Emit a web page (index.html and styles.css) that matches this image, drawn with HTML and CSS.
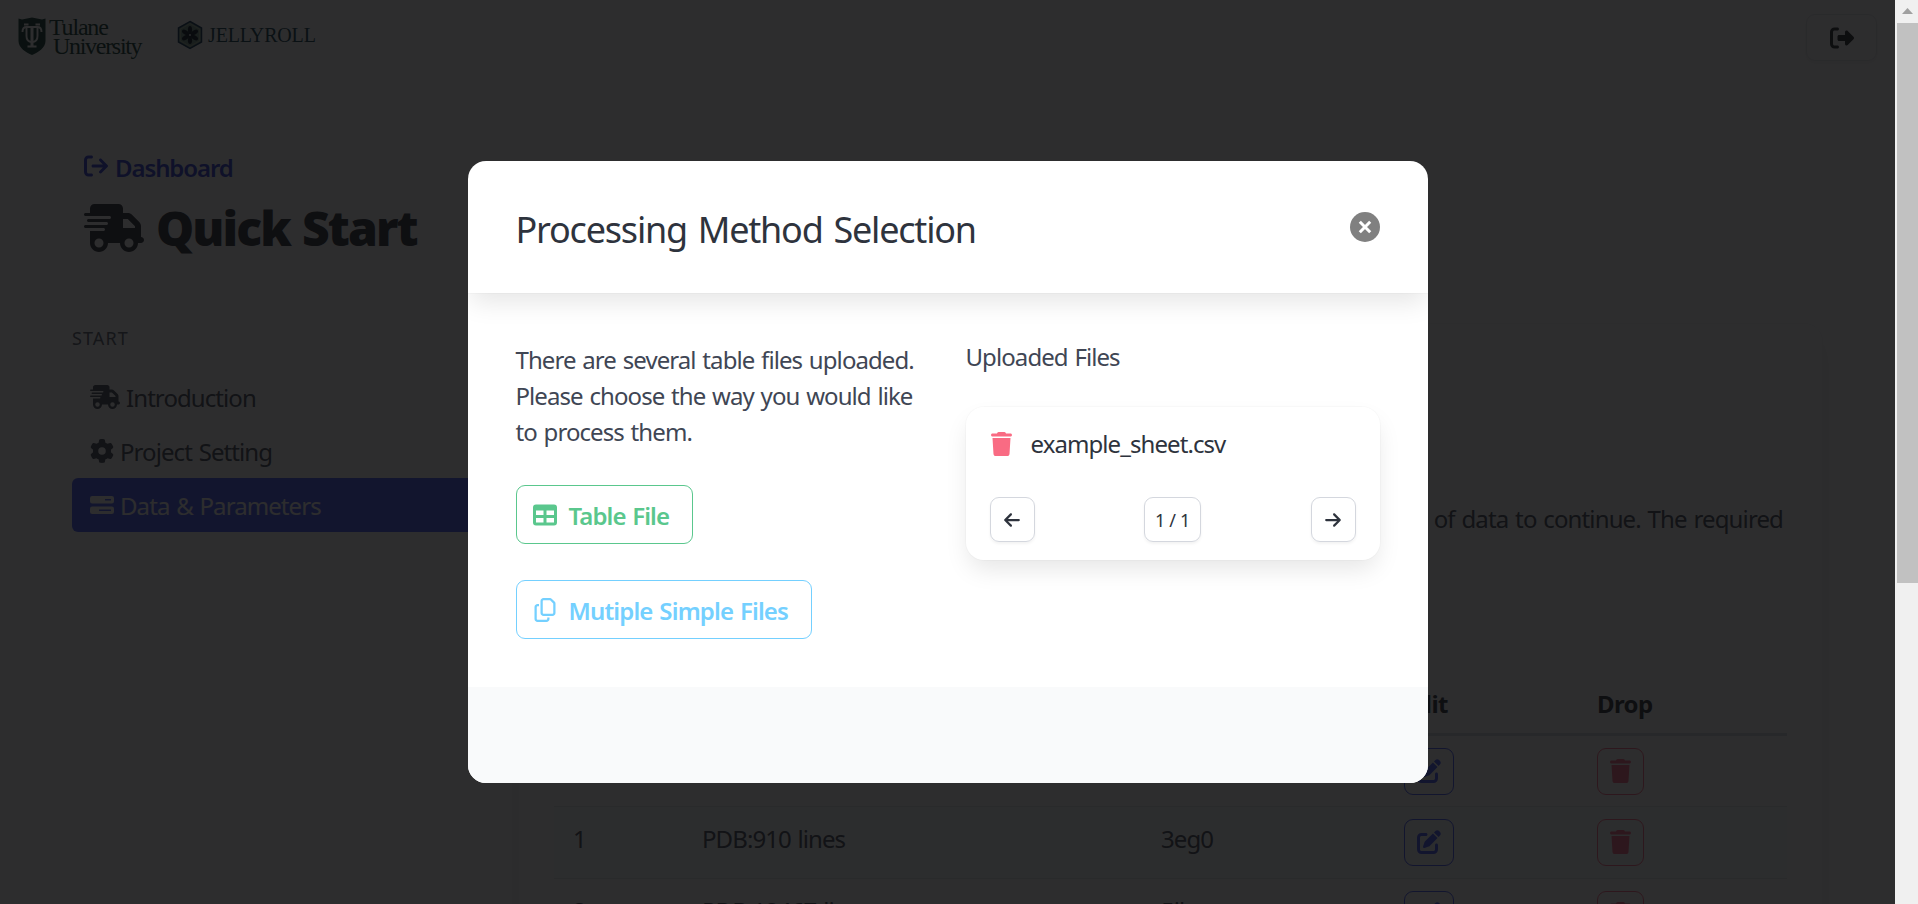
FILE: index.html
```html
<!DOCTYPE html>
<html lang="en">
<head>
<meta charset="utf-8">
<title>Quick Start</title>
<link rel="stylesheet" href="styles.css">
</head>
<body>
<svg class="defs" width="0" height="0">
  <symbol id="truck" viewBox="0 0 640 512"><path d="M112 0C85.500 0 64 21.500 64 48V96H16c-8.800 0-16 7.200-16 16s7.200 16 16 16H272c8.800 0 16 7.200 16 16s-7.200 16-16 16H48c-8.800 0-16 7.200-16 16s7.200 16 16 16H240c8.800 0 16 7.200 16 16s-7.200 16-16 16H16c-8.800 0-16 7.200-16 16s7.200 16 16 16H208c8.800 0 16 7.200 16 16s-7.200 16-16 16H64V416c0 53 43 96 96 96s96-43 96-96H384c0 53 43 96 96 96s96-43 96-96h32c17.700 0 32-14.300 32-32s-14.300-32-32-32V237.300c0-17-6.700-33.300-18.700-45.300L512 114.700c-12-12-28.300-18.700-45.300-18.700H416V48c0-26.500-21.500-48-48-48H112zM544 237.300V256H416V160h50.700L544 237.300zM160 368a48 48 0 1 1 0 96 48 48 0 1 1 0-96zm272 48a48 48 0 1 1 96 0 48 48 0 1 1-96 0z"/></symbol>
  <symbol id="gear" viewBox="0 0 512 512"><path d="M495.900 166.600c3.200 8.700 .5 18.400-6.400 24.600l-43.300 39.400c1.100 8.300 1.700 16.800 1.700 25.400s-.6 17.100-1.700 25.400l43.300 39.400c6.900 6.200 9.600 15.900 6.400 24.600c-4.400 11.900-9.700 23.300-15.800 34.300l-4.700 8.100c-6.600 11-14 21.400-22.100 31.200c-5.900 7.200-15.700 9.600-24.500 6.800l-55.700-17.700c-13.400 10.300-28.200 18.900-44 25.400l-12.500 57.100c-2 9.100-9 16.300-18.200 17.800c-13.800 2.300-28 3.500-42.500 3.500s-28.700-1.200-42.500-3.500c-9.200-1.500-16.200-8.700-18.200-17.800l-12.500-57.100c-15.800-6.500-30.600-15.100-44-25.400L83.100 425.900c-8.800 2.800-18.600 .3-24.500-6.800c-8.100-9.800-15.500-20.200-22.100-31.200l-4.700-8.100c-6.100-11-11.400-22.400-15.800-34.300c-3.200-8.700-.5-18.400 6.400-24.600l43.300-39.400C64.600 273.100 64 264.600 64 256s.6-17.100 1.700-25.400L22.400 191.200c-6.900-6.200-9.600-15.900-6.400-24.600c4.400-11.900 9.700-23.300 15.800-34.300l4.700-8.100c6.600-11 14-21.400 22.100-31.200c5.900-7.200 15.700-9.600 24.500-6.800l55.700 17.700c13.400-10.300 28.200-18.900 44-25.400l12.500-57.100c2-9.100 9-16.300 18.200-17.800C227.300 1.200 241.500 0 256 0s28.700 1.200 42.500 3.500c9.200 1.500 16.200 8.700 18.200 17.800l12.500 57.100c15.800 6.500 30.600 15.100 44 25.400l55.700-17.700c8.800-2.800 18.600-.3 24.500 6.800c8.100 9.800 15.500 20.200 22.100 31.200l4.700 8.100c6.100 11 11.400 22.400 15.800 34.300zM256 336a80 80 0 1 0 0-160 80 80 0 1 0 0 160z"/></symbol>
  <symbol id="bars" viewBox="0 0 512 512"><path fill-rule="evenodd" d="M48 64H464a48 48 0 0 1 48 48v64a48 48 0 0 1-48 48H48a48 48 0 0 1-48-48v-64a48 48 0 0 1 48-48zM320 128v32H448V128zM48 288H464a48 48 0 0 1 48 48v64a48 48 0 0 1-48 48H48a48 48 0 0 1-48-48v-64a48 48 0 0 1 48-48zM192 352v32H448V352z"/></symbol>
  <symbol id="table" viewBox="0 0 512 512"><path fill-rule="evenodd" d="M64 32H448a64 64 0 0 1 64 64V416a64 64 0 0 1-64 64H64a64 64 0 0 1-64-64V96a64 64 0 0 1 64-64zM64 160v96H224V160zM288 160v96H448V160zM64 320v96H224V320zM288 320v96H448V320z"/></symbol>
  <symbol id="copy" viewBox="0 0 448 512"><path d="M384 336H192c-8.800 0-16-7.200-16-16V64c0-8.800 7.200-16 16-16H332.100L400 115.900V320c0 8.800-7.200 16-16 16zM192 384H384c35.300 0 64-28.700 64-64V115.900c0-12.700-5.100-24.900-14.100-33.900L366.100 14.100c-9-9-21.200-14.100-33.900-14.100H192c-35.300 0-64 28.700-64 64V320c0 35.300 28.700 64 64 64zM64 128c-35.300 0-64 28.700-64 64V448c0 35.300 28.700 64 64 64H256c35.300 0 64-28.700 64-64V416H272v32c0 8.800-7.200 16-16 16H64c-8.800 0-16-7.200-16-16V192c0-8.800 7.200-16 16-16H96V128H64z"/></symbol>
  <symbol id="trash" viewBox="0 0 448 512"><path d="M135.200 17.700L128 32H32C14.300 32 0 46.300 0 64S14.300 96 32 96H416c17.700 0 32-14.300 32-32s-14.300-32-32-32H320l-7.200-14.300C307.400 6.800 296.300 0 284.200 0H163.800c-12.100 0-23.200 6.800-28.600 17.700zM416 128H32L53.200 467c1.600 25.300 22.600 45 47.900 45H346.900c25.300 0 46.300-19.700 47.900-45L416 128z"/></symbol>
  <symbol id="edit" viewBox="0 0 512 512"><path d="M471.600 21.700c-21.900-21.900-57.300-21.900-79.200 0L362.300 51.700l97.900 97.900 30.100-30.100c21.900-21.900 21.900-57.300 0-79.200L471.600 21.700zm-299.200 220c-6.100 6.100-10.800 13.600-13.500 21.900l-29.600 88.800c-2.900 8.600-.6 18.100 5.800 24.600s15.900 8.700 24.600 5.800l88.800-29.600c8.200-2.700 15.700-7.400 21.900-13.500L437.700 172.300 339.700 74.300 172.400 241.700zM96 64C43 64 0 107 0 160V416c0 53 43 96 96 96H352c53 0 96-43 96-96V320c0-17.700-14.300-32-32-32s-32 14.300-32 32v96c0 17.700-14.300 32-32 32H96c-17.700 0-32-14.300-32-32V160c0-17.700 14.300-32 32-32h96c17.700 0 32-14.300 32-32s-14.300-32-32-32H96z"/></symbol>
  <symbol id="exit-solid" viewBox="0 0 512 512"><path d="M377.900 105.900L500.700 228.700c7.200 7.200 11.300 17.100 11.300 27.300s-4.100 20.100-11.300 27.300L377.900 406.100c-6.400 6.400-15 9.900-24 9.900c-18.700 0-33.900-15.200-33.900-33.900l0-62.100-128 0c-17.700 0-32-14.300-32-32l0-64c0-17.700 14.300-32 32-32l128 0 0-62.100c0-18.700 15.200-33.900 33.900-33.900c9 0 17.600 3.600 24 9.900zM160 96L96 96c-17.700 0-32 14.300-32 32l0 256c0 17.700 14.300 32 32 32l64 0c17.700 0 32 14.300 32 32s-14.300 32-32 32l-64 0c-53 0-96-43-96-96L0 128C0 75 43 32 96 32l64 0c17.700 0 32 14.300 32 32s-14.300 32-32 32z"/></symbol>
  <symbol id="exit" viewBox="0 0 512 512"><path d="M502.600 278.600c12.500-12.500 12.500-32.800 0-45.300l-128-128c-12.500-12.500-32.800-12.500-45.300 0s-12.500 32.800 0 45.300L402.700 224 192 224c-17.700 0-32 14.300-32 32s14.300 32 32 32l210.700 0-73.400 73.400c-12.500 12.500-12.500 32.800 0 45.300s32.800 12.500 45.300 0l128-128zM160 96c17.700 0 32-14.300 32-32s-14.300-32-32-32L96 32C43 32 0 75 0 128L0 384c0 53 43 96 96 96l64 0c17.700 0 32-14.300 32-32s-14.300-32-32-32l-64 0c-17.700 0-32-14.300-32-32l0-256c0-17.700 14.300-32 32-32l64 0z"/></symbol>
  <symbol id="arrow" viewBox="0 0 448 512"><path d="M438.600 278.600c12.500-12.500 12.500-32.800 0-45.300l-160-160c-12.500-12.500-32.800-12.500-45.300 0s-12.500 32.800 0 45.300L338.800 224 32 224c-17.700 0-32 14.300-32 32s14.300 32 32 32l306.700 0L233.400 393.400c-12.500 12.500-12.500 32.800 0 45.300s32.800 12.500 45.300 0l160-160z"/></symbol>
</svg>

<div class="page">
  <nav class="navbar">
    <div class="tulane">
      <svg class="shield" viewBox="0 0 28 38"><path fill="#08372c" d="M.5 1.500 4 2.500 14 .5 24 2.500 27.500 1.500V24C27.500 31 20 35.500 14 38 8 35.500.5 31 .5 24z"/><g fill="none" stroke="#fff" stroke-width="1.900"><path d="M4.500 15c0-4 1.500-5 4-5h11c2.500 0 4 1 4 5M8.500 11v8c0 4 2 6 5.500 6s5.500-2 5.500-6v-8"/><path stroke-width="3" d="M14 9v20"/><path stroke-width="1.800" d="M9.500 29.500h9M6 7.500h4.500M17.500 7.500H22"/></g></svg>
      <div class="tulane-name"><span>Tulane</span><span class="tulane-uni">University</span></div>
    </div>
    <div class="jelly">
      <svg class="hex" viewBox="0 0 26 30"><path d="M13 1.500 24.500 8v14L13 28.500 1.500 22V8z" fill="#7fa191" stroke="#0a3050" stroke-width="1.500"/><path d="M13 3.800 22.500 9.200v11.600L13 26.200 3.500 20.800V9.200z" fill="#6f9384" stroke="#a9b59c" stroke-width=".8"/><g fill="#061420"><ellipse cx="13" cy="9.700" rx="2.100" ry="3.800"/><ellipse cx="13" cy="9.700" rx="2.100" ry="3.800" transform="rotate(60 13 15)"/><ellipse cx="13" cy="9.700" rx="2.100" ry="3.800" transform="rotate(120 13 15)"/><ellipse cx="13" cy="9.700" rx="2.100" ry="3.800" transform="rotate(180 13 15)"/><ellipse cx="13" cy="9.700" rx="2.100" ry="3.800" transform="rotate(240 13 15)"/><ellipse cx="13" cy="9.700" rx="2.100" ry="3.800" transform="rotate(300 13 15)"/><circle cx="13" cy="15" r="3"/></g><circle cx="13" cy="15" r="1" fill="#ddd"/></svg>
      <span>JELLYROLL</span>
    </div>
    <button class="btn logout"><svg class="ic24"><use href="#exit-solid"/></svg></button>
  </nav>

  <div class="columns">
    <aside class="side">
      <a class="dash"><svg class="ic24"><use href="#exit"/></svg><span>Dashboard</span></a>
      <h1 class="title"><svg class="truck-lg"><use href="#truck"/></svg><span>Quick Start</span></h1>
      <p class="menu-label">START</p>
      <ul class="menu">
        <li><svg class="ic30"><use href="#truck"/></svg><span>Introduction</span></li>
        <li><svg class="ic24"><use href="#gear"/></svg><span>Project Setting</span></li>
        <li class="active"><svg class="ic24"><use href="#bars"/></svg><span>Data &amp; Parameters</span></li>
      </ul>
    </aside>
    <main class="card">
      <p class="lead">of data to continue. The required</p>
      <table class="table">
        <colgroup><col class="c1"><col class="c2"><col class="c3"><col class="c4"><col></colgroup>
        <thead><tr><th></th><th></th><th></th><th>Edit</th><th>Drop</th></tr></thead>
        <tbody>
          <tr><td>0</td><td></td><td></td><td class="act"><span class="btn edit"><svg class="ic24"><use href="#edit"/></svg></span></td><td class="act"><span class="btn drop"><svg class="ic21"><use href="#trash"/></svg></span></td></tr>
          <tr class="alt"><td>1</td><td>PDB:910 lines</td><td>3eg0</td><td class="act"><span class="btn edit"><svg class="ic24"><use href="#edit"/></svg></span></td><td class="act"><span class="btn drop"><svg class="ic21"><use href="#trash"/></svg></span></td></tr>
          <tr><td>2</td><td>PDB:12467 lines</td><td>5ilr</td><td class="act"><span class="btn edit"><svg class="ic24"><use href="#edit"/></svg></span></td><td class="act"><span class="btn drop"><svg class="ic21"><use href="#trash"/></svg></span></td></tr>
        </tbody>
      </table>
    </main>
  </div>
</div>

<div class="overlay">
  <section class="modal">
    <header class="modal-head">
      <h2>Processing Method Selection</h2>
      <svg class="close" viewBox="0 0 30 30"><circle cx="15" cy="15" r="15" fill="#808080"/><path d="M9.800 9.800l10.400 10.400M20.200 9.800 9.800 20.200" stroke="#fff" stroke-width="3"/></svg>
    </header>
    <div class="modal-body">
      <div class="left">
        <p><span>There are several table files uploaded.</span><br><span>Please choose the way you would like</span><br><span>to process them.</span></p>
        <button class="btn big green"><svg class="ic24"><use href="#table"/></svg><span>Table File</span></button>
        <button class="btn big blue"><svg class="ic24"><use href="#copy"/></svg><span>Mutiple Simple Files</span></button>
      </div>
      <div class="right">
        <p>Uploaded Files</p>
        <div class="files">
          <div class="file"><svg class="ic21"><use href="#trash"/></svg><span>example_sheet.csv</span></div>
          <div class="pager">
            <button class="btn sq"><svg class="arr flip"><use href="#arrow"/></svg></button>
            <span class="btn count">1 / 1</span>
            <button class="btn sq"><svg class="arr"><use href="#arrow"/></svg></button>
          </div>
        </div>
      </div>
    </div>
    <footer class="modal-foot"></footer>
  </section>
</div>
<div class="scrollbar"><svg width="11" height="6" viewBox="0 0 11 6"><path d="M5.500 0 11 6H0z" fill="#a0a0a0"/></svg><div class="thumb"></div></div>
</body>
</html>
```

FILE: styles.css
```css
* { box-sizing: border-box; }
body { margin: 0; height: 904px; overflow: hidden; display: flex; background: #fff; font-family: "Noto Sans", "Open Sans", sans-serif; font-size: 24px; line-height: 36px; color: #404654; letter-spacing: -0.92px; word-spacing: 1.4px; }
p, h1, h2, ul { margin: 0; padding: 0; font-weight: 400; list-style: none; }
.defs { position: absolute; }
svg { fill: currentColor; flex: none; display: block; }
span { white-space: nowrap; }
.ic24 { width: 24px; height: 24px; }
.ic30 { width: 30px; height: 24px; }
.ic21 { width: 21px; height: 24px; }

.page { width: 1895px; height: 904px; overflow: hidden; flex: none; }
.btn { display: flex; align-items: center; justify-content: center; background: none; border: 1px solid #d4d7de; border-radius: 9px; font: inherit; letter-spacing: inherit; word-spacing: inherit; color: inherit; padding: 0; }

.navbar { display: flex; height: 74px; padding: 14px 18px 0; align-items: flex-start; }
.tulane { display: flex; gap: 3px; width: 124px; padding-top: 3px; color: #08372c; }
.shield { width: 28px; height: 38px; }
.tulane-name { display: flex; flex-direction: column; padding-top: 1px; font: 24px/19px "Liberation Serif", serif; letter-spacing: -1.3px; }
.tulane-name span:first-child { letter-spacing: -1.2px; }
.tulane-uni { padding-left: 4px; }
.jelly { display: flex; gap: 5px; margin-left: 35px; padding-top: 6px; color: #0a3a4c; font: 20px/30px "Liberation Serif", serif; letter-spacing: -0.15px; }
.hex { width: 26px; height: 30px; }
.logout { margin-left: auto; width: 71px; height: 47px; color: #1f2329; border-color: #e3e5ea; box-shadow: 0 2px 4px #0001; }

.columns { display: flex; padding: 0 62px 0 72px; }
.side { width: 414px; margin-right: 32px; padding-top: 76px; }
.dash { display: flex; gap: 7px; padding-left: 12px; color: #2c3ddb; font-weight: 600; letter-spacing: -1.1px; }
.dash svg { margin-top: 4px; }
.title { display: flex; gap: 12px; align-items: center; margin-top: 14px; padding-left: 12px; font-size: 48px; line-height: 54px; font-weight: 900; color: #262a33; letter-spacing: -1.9px; }
.title span { padding-top: 1px; }
.truck-lg { width: 60px; height: 48px; }
.menu-label { margin-top: 70px; font-size: 18px; line-height: 27px; letter-spacing: 1.1px; color: #565c6b; }
.menu { margin-top: 18px; }
.menu li { height: 54px; padding: 9px 18px; display: flex; align-items: center; gap: 6px; border-radius: 6px; }
.menu span { padding-top: 2px; }
.menu .active { background: #4258ff; color: #fff; }

.card { width: 1305px; height: 700px; flex: none; margin-top: 249px; padding: 177px 35px 0; border: 1px solid #f6f7f8; border-radius: 18px; box-shadow: 0 12px 24px -3px #0a0a0a1a; }
.lead { text-align: right; padding-right: 4px; letter-spacing: -0.87px; }
.table { width: 1233px; margin-top: 137px; border-collapse: collapse; table-layout: fixed; }
.c1 { width: 129px; } .c2 { width: 459px; } .c3 { width: 243px; } .c4 { width: 193px; }
th { text-align: left; height: 60px; padding: 2px 0 0 19px; border-bottom: 3px solid #d6d9e0; color: #262a33; letter-spacing: -0.6px; }
td { height: 72px; padding: 14px 0 0 19px; vertical-align: top; border-bottom: 1px solid #e4e6ea; }
td.act { padding-top: 12px; }
.alt { background: #f9fafb; }
.edit { width: 50px; height: 47px; color: #4258ff; border-color: #4258ff; }
.drop { width: 47px; height: 47px; color: #ff6685; border-color: #ff6685; }

.overlay { position: absolute; left: 0; top: 0; width: 1895px; height: 904px; background: rgba(10, 10, 12, .86); display: flex; padding: 161px 0 0 467.5px; align-items: flex-start; }
.modal { width: 960px; height: 622px; background: #fff; border-radius: 18px; overflow: hidden; display: flex; flex-direction: column; }
.modal-head { height: 132px; padding: 0 48px; display: flex; align-items: center; justify-content: space-between; box-shadow: 0 12px 24px -3px #0a0a0a1a, 0 0 0 1px #0a0a0a05; }
h2 { font-size: 36px; line-height: 40px; color: #2e333d; letter-spacing: -1.2px; word-spacing: 2.6px; padding-top: 5px; }
.close { width: 30px; height: 30px; }
.modal-body { flex: 1; display: flex; padding: 48px 48px 0; color: #404654; }
.left { width: 450px; padding-top: 1px; }
.big { height: 59px; padding: 2px 0 0 16px; font-weight: 600; gap: 12px; justify-content: flex-start; }
.big svg { margin-top: -2px; }
.green { width: 177px; margin-top: 35px; color: #5ac78d; border-color: #5ac78d; }
.blue { width: 296px; margin-top: 36px; color: #74d0ff; border-color: #74d0ff; letter-spacing: -0.85px; }
.right { width: 414px; }
.right p { margin-top: -2px; }
.files { height: 153px; margin-top: 32px; padding: 19px 24px 18px; border-radius: 18px; box-shadow: 0 12px 24px -3px #0a0a0a1a, 0 0 0 1px #0a0a0a05; display: flex; flex-direction: column; justify-content: space-between; color: #2e333d; }
.file { display: flex; gap: 19px; align-items: center; padding-left: 1px; }
.file svg { color: #f96b83; }
.pager { display: flex; justify-content: space-between; }
.sq { width: 45px; height: 45px; box-shadow: 0 2px 3px #0000000d; }
.count { width: 57px; height: 45px; font-size: 18px; letter-spacing: -0.3px; word-spacing: 0; box-shadow: 0 2px 3px #0000000d; }
.arr { width: 16px; height: 18px; }
.flip { transform: scaleX(-1); }
.modal-foot { height: 96px; background: #f9fafb; }

.scrollbar { width: 23px; height: 904px; background: #f0f0f0; padding: 8px 0 0 7px; flex: none; }
.thumb { width: 21px; height: 560px; margin: 9px 0 0 -5px; background: #c1c1c1; }
```
